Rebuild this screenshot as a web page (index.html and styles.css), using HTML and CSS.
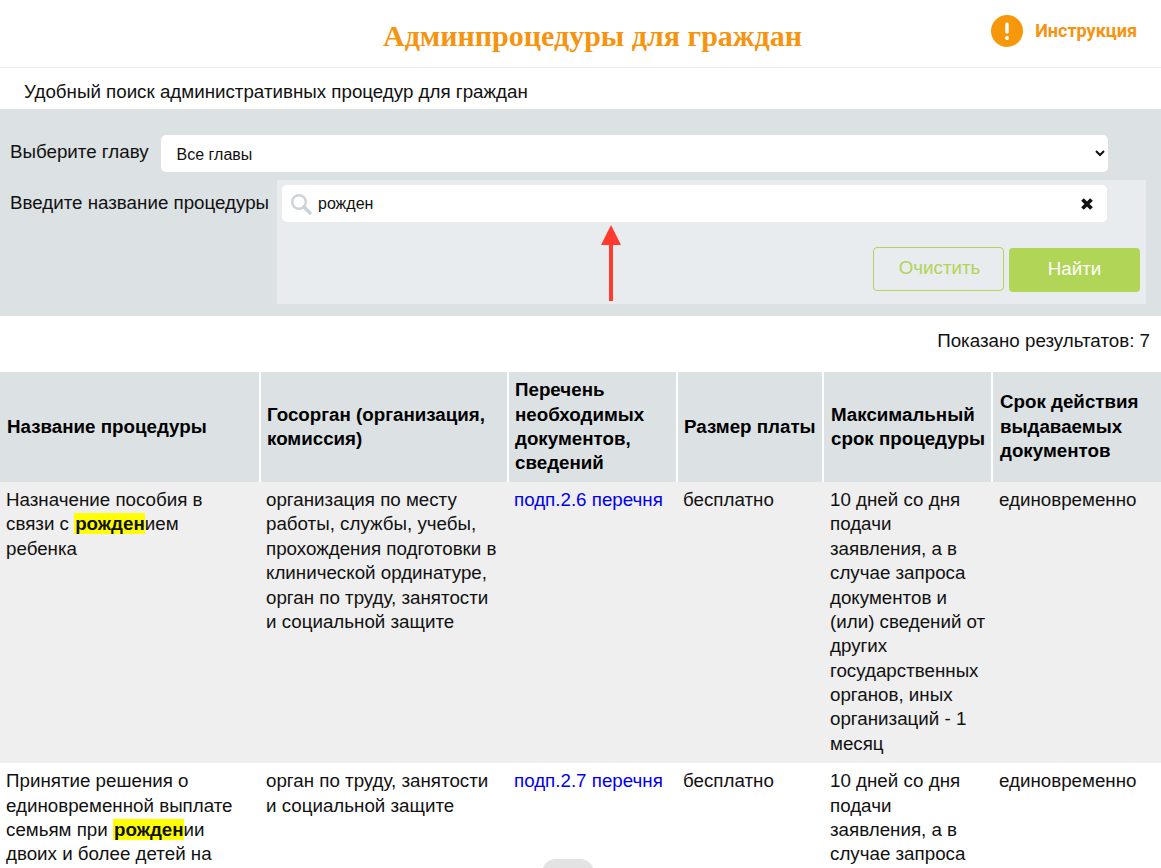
FILE: index.html
```html
<!DOCTYPE html>
<html lang="ru">
<head>
<meta charset="utf-8">
<title>Админпроцедуры для граждан</title>
<link rel="stylesheet" href="styles.css">
</head>
<body>
<div class="page">
  <header class="top">
    <h1 class="title">Админпроцедуры для граждан</h1>
    <a class="guide" href="#">
      <svg class="guide-icon" viewBox="0 0 32 32" aria-hidden="true"><circle cx="16" cy="16" r="16" fill="#f7980a"/><rect x="14.3" y="7.5" width="3.4" height="11" rx="1.5" fill="#fff"/><circle cx="16" cy="23" r="2" fill="#fff"/></svg>
      <span>Инструкция</span>
    </a>
  </header>
  <p class="subtitle">Удобный поиск административных процедур для граждан</p>
  <section class="filters">
    <div class="row-chapter">
      <label class="filter-label chapter-label">Выберите главу</label>
      <select class="chapter"><option>Все главы</option></select>
    </div>
    <div class="row-search">
      <label class="filter-label search-label">Введите название процедуры</label>
      <div class="search-box">
        <div class="search-input">
          <svg class="search-icon" viewBox="0 0 22 22" aria-hidden="true"><circle cx="9" cy="9" r="6.8" fill="none" stroke="#cfd3d5" stroke-width="2.4"/><path d="M14 14l6 6" stroke="#cfd3d5" stroke-width="3.6" stroke-linecap="round"/></svg>
          <span class="query">рожден</span>
          <svg class="clear-x" viewBox="0 0 14 14" aria-hidden="true"><path d="M2.5 2.5l9 9M11.5 2.5l-9 9" stroke="#111" stroke-width="3.8"/></svg>
        </div>
        <div class="actions">
          <button class="btn btn-clear">Очистить</button>
          <button class="btn btn-find">Найти</button>
        </div>
      </div>
    </div>
    <svg class="arrow" viewBox="0 0 20 76" aria-hidden="true"><path d="M10 0L20 20H12V76H8V20H0Z" fill="#ff3b30"/></svg>
  </section>
  <p class="count">Показано результатов: 7</p>
  <table class="results">
    <colgroup><col class="c1"><col class="c2"><col class="c3"><col class="c4"><col class="c5"><col class="c6"></colgroup>
    <thead>
      <tr>
        <th>Название процедуры</th>
        <th>Госорган (организация, комиссия)</th>
        <th>Перечень необходимых документов, сведений</th>
        <th>Размер платы</th>
        <th class="wide-pad">Максимальный срок процедуры</th>
        <th class="wide-pad">Срок действия выдаваемых документов</th>
      </tr>
    </thead>
    <tbody>
      <tr class="odd">
        <td>Назначение пособия в связи с <mark>рожден</mark>ием ребенка</td>
        <td>организация по месту работы, службы, учебы, прохождения подготовки в клинической ординатуре, орган по труду, занятости и социальной защите</td>
        <td><a href="#">подп.2.6 перечня</a></td>
        <td>бесплатно</td>
        <td class="wide-pad">10 дней со дня подачи заявления, а в случае запроса документов и (или) сведений от других государственных органов, иных организаций - 1 месяц</td>
        <td class="wide-pad">единовременно</td>
      </tr>
      <tr>
        <td>Принятие решения о единовременной выплате семьям при <mark>рожден</mark>ии двоих и более детей на приобретение детских вещей</td>
        <td>орган по труду, занятости и социальной защите</td>
        <td><a href="#">подп.2.7 перечня</a></td>
        <td>бесплатно</td>
        <td class="wide-pad">10 дней со дня подачи заявления, а в случае запроса документов и (или) сведений</td>
        <td class="wide-pad">единовременно</td>
      </tr>
    </tbody>
  </table>
  <div class="pill"></div>
</div>
</body>
</html>
```
FILE: styles.css
```css
* { box-sizing: border-box; }
html, body { margin: 0; padding: 0; height: 868px; overflow: hidden; background: #fff; }
body { font-family: "Liberation Sans", Arial, sans-serif; font-size: 18.75px; line-height: 24.375px; color: #111; }
.page { position: relative; height: 868px; overflow: hidden; }
.top { display: flex; height: 68px; border-bottom: 1px solid #eee; align-items: center; justify-content: center; position: relative; }
.title { margin: 0 0 0 24px; padding-top: 4px; font-family: "Liberation Serif", serif; font-weight: bold; font-size: 30px; line-height: 32px; color: #f6930f; }
.guide { position: absolute; top: 15px; right: 24px; display: flex; align-items: center; gap: 12px; font-family: Roboto, sans-serif; font-weight: 700; font-size: 18px; color: #f6930f; text-decoration: none; }
.guide-icon { width: 32px; height: 32px; }
.subtitle { margin: 0; padding: 12px 24px 5px; height: 41px; }
.filters { position: relative; height: 207px; background: #dce1e3; padding: 26px 0 0 10px; }
.row-chapter { display: flex; align-items: center; height: 37px; }
.filter-label { white-space: nowrap; }
.chapter-label { padding-bottom: 2px; }
.chapter { margin-left: 12px; width: 947px; height: 37px; border: 0; border-radius: 5px; background: #fff; font-family: "Liberation Sans", sans-serif; font-size: 16px; padding: 2px 0 0 12px; color: #111; }
.row-search { display: flex; margin-top: 8px; }
.search-label { padding-top: 11px; width: 267px; }
.search-box { width: 869px; height: 124px; background: #e8ecee; padding: 5px; }
.search-input { display: flex; align-items: center; width: 825px; height: 37px; background: #fff; border-radius: 5px; padding: 0 13px 0 8px; }
.search-icon { width: 22px; height: 22px; }
.query { margin-left: 6px; flex: 1; font-size: 16px; padding-top: 2px; }
.clear-x { width: 14px; height: 14px; }
.actions { display: flex; justify-content: flex-end; gap: 5px; margin-top: 25px; padding-right: 1px; }
.btn { width: 131px; height: 44px; border-radius: 4px; font-family: "Liberation Sans", sans-serif; font-size: 18.75px; padding: 0 0 2px; }
.btn-clear { background: transparent; border: 1px solid #b1d557; color: #b1d557; padding-left: 2px; }
.btn-find { background: #b1d557; border: 0; color: #fff; margin-top: 1px; }
.arrow { position: absolute; left: 601px; top: 116px; width: 20px; height: 76px; }
.count { margin: 0; height: 56px; padding: 13px 11px 0 0; text-align: right; }
.results { width: 1161px; border-collapse: collapse; table-layout: fixed; }
.c1 { width: 260px; } .c2 { width: 248px; } .c3 { width: 169px; } .c4 { width: 146px; } .c5 { width: 169px; } .c6 { width: 169px; }
th { background: #dce1e3; border-left: 2px solid #fff; padding: 6px; text-align: left; font-weight: bold; height: 110px; color: #000; }
th:first-child { border-left: 0; padding-left: 7px; }
td { vertical-align: top; padding: 6px 6px 7px; }
td:first-child { padding-right: 14px; }
th.wide-pad, td.wide-pad { padding-left: 7px; padding-right: 5px; }
.odd td { background: #efefef; }
mark { background: #ffff00; font-weight: bold; color: #111; padding-left: 1px; }
td a { color: #0000ee; text-decoration: none; }
.pill { position: absolute; left: 542px; top: 859px; width: 52px; height: 30px; border-radius: 14px; background: #e3e3e3; }
```
